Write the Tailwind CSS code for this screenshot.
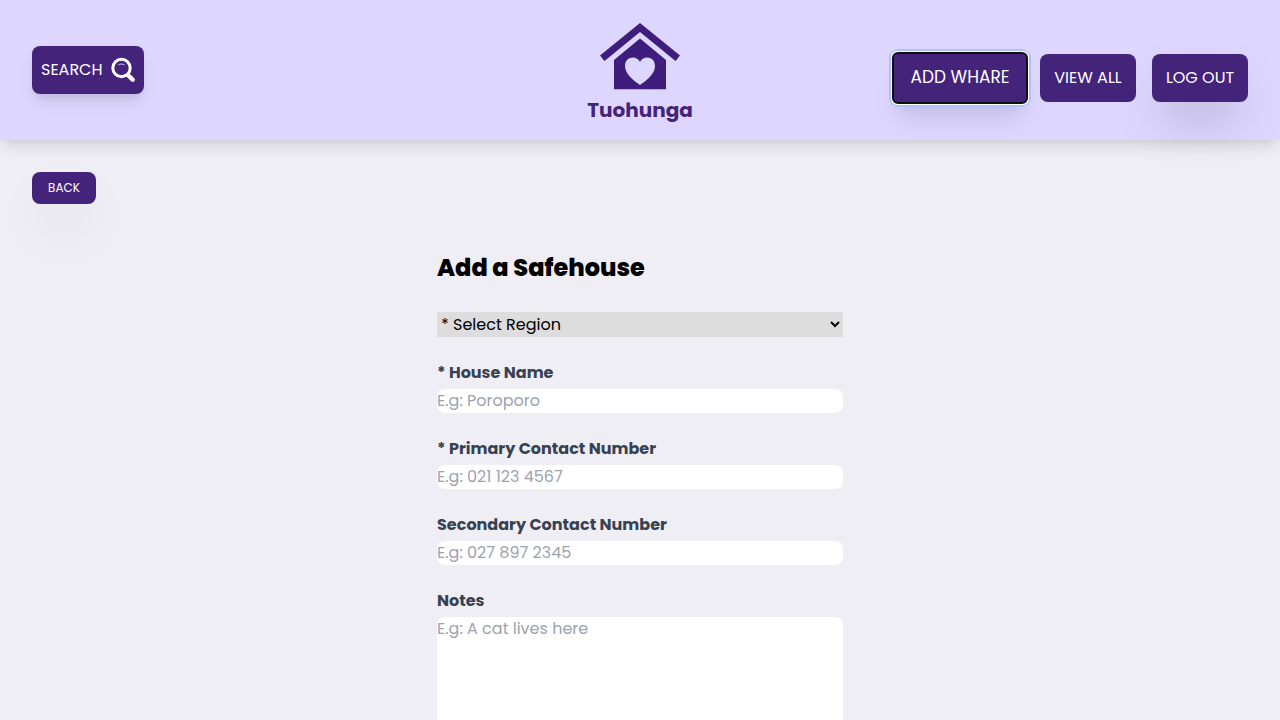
<!DOCTYPE html>
<html lang="en">
<head>
<meta charset="utf-8">
<meta name="viewport" content="width=device-width, initial-scale=1">
<title>Tuohunga</title>
<script src="https://cdn.jsdelivr.net/npm/@tailwindcss/browser@4"></script>
</head>
<body class="min-h-screen bg-[#efeef4] font-['Poppins','Inter',sans-serif] text-base text-black">
  <header class="relative grid grid-cols-[1fr_auto_1fr] items-center bg-[#ddd6fe] px-8 py-4 shadow-[0_10px_15px_-3px_rgba(0,0,0,0.1),0_4px_6px_-2px_rgba(0,0,0,0.05)]">
    <button type="button" class="flex h-12 w-28 items-center justify-between justify-self-start rounded-lg bg-[#44237a] pr-2 pl-[9px] text-white shadow-[0_10px_15px_-3px_rgba(0,0,0,0.1),0_4px_6px_-2px_rgba(0,0,0,0.05)]">
      <span>SEARCH</span>
      <svg class="size-[26px]" viewBox="0 0 26 26" fill="none" stroke="white" stroke-linecap="round" aria-hidden="true">
        <circle cx="11.500" cy="11" r="8.700" stroke-width="3"/>
        <path d="M18.500 18.500l4.200 4.200" stroke-width="4.400"/>
        <path d="M6.800 8.800Q11.500 4 16 8.800Q11.500 6.400 6.800 8.800" stroke="none" fill="#ddd6fe"/>
      </svg>
    </button>
    <a href="#" class="flex flex-col items-center pt-1 text-xl leading-7 font-bold text-[#44237a]">
      <svg class="mb-1 h-[72px] w-20" viewBox="0 0 80 72" fill="#3f1d7c" aria-hidden="true">
        <path d="M40 3L80 35.5L75.5 41L40 12L4.500 41L0 35.500Z"/>
        <path fill-rule="evenodd" d="M40 18.500L66 40V69.200H14V40ZM40 65C46 61 55 54 55 46C55 36 43 35 40 42C37 35 25 36 25 46C25 54 34 61 40 65Z"/>
      </svg>
      <span>Tuohunga</span>
    </a>
    <nav class="flex items-center justify-self-end pt-4">
      <button type="button" class="mr-[13px] h-[50px] w-[134px] rounded-[5px] bg-[#44237a] text-[17px] text-white shadow-[0_0_0_4px_#afc3fa,0_20px_25px_-5px_rgba(0,0,0,0.1),0_10px_10px_-5px_rgba(0,0,0,0.04)] [outline:auto_1px_#101010]">ADD WHARE</button>
      <button type="button" class="mr-4 h-12 w-24 rounded-lg bg-[#44237a] text-white">VIEW ALL</button>
      <button type="button" class="h-12 w-24 rounded-lg bg-[#44237a] text-white shadow-[0_25px_50px_-12px_rgba(0,0,0,0.25)]">LOG OUT</button>
    </nav>
  </header>
  <main class="px-8 pt-8 pb-12">
    <button type="button" class="block h-8 w-16 rounded-lg bg-[#44237a] text-xs text-white shadow-[0_25px_50px_-12px_rgba(0,0,0,0.25)]">BACK</button>
    <form class="mx-auto mt-11 flex w-full max-w-[406px] flex-col gap-6">
      <h1 class="text-2xl leading-10 font-extrabold">Add a Safehouse</h1>
      <select aria-label="Region" class="h-[25px] w-full bg-[#dddddd]">
        <option>* Select Region</option>
      </select>
      <div class="flex flex-col gap-1">
        <label for="house" class="font-bold text-[#374151]">* House Name</label>
        <input id="house" type="text" placeholder="E.g: Poroporo" class="h-6 w-full rounded-lg bg-white placeholder:text-[#9ca3af]">
      </div>
      <div class="flex flex-col gap-1">
        <label for="primary" class="font-bold text-[#374151]">* Primary Contact Number</label>
        <input id="primary" type="tel" placeholder="E.g: 021 123 4567" class="h-6 w-full rounded-lg bg-white placeholder:text-[#9ca3af]">
      </div>
      <div class="flex flex-col gap-1">
        <label for="secondary" class="font-bold text-[#374151]">Secondary Contact Number</label>
        <input id="secondary" type="tel" placeholder="E.g: 027 897 2345" class="h-6 w-full rounded-lg bg-white placeholder:text-[#9ca3af]">
      </div>
      <div class="flex flex-col gap-1">
        <label for="notes" class="font-bold text-[#374151]">Notes</label>
        <textarea id="notes" rows="6" placeholder="E.g: A cat lives here" class="w-full resize-none rounded-lg bg-white placeholder:text-[#9ca3af]"></textarea>
      </div>
    </form>
  </main>
</body>
</html>
